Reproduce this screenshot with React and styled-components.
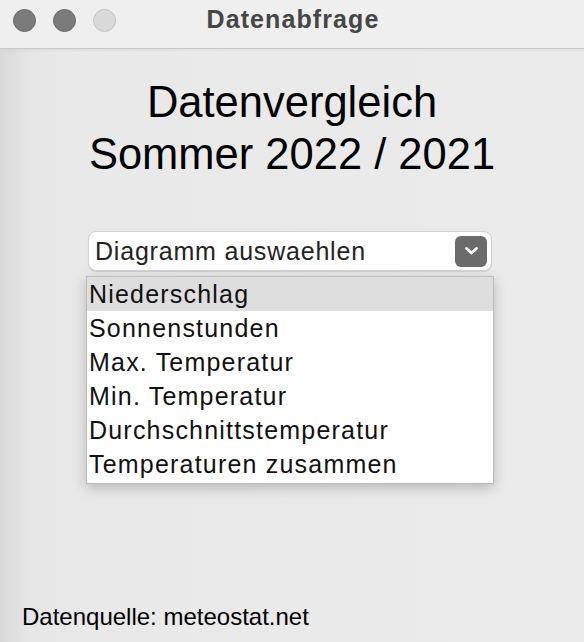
import styled, { createGlobalStyle } from "styled-components";

const GlobalStyle = createGlobalStyle`
  html, body {
    margin: 0;
    padding: 0;
    height: 100%;
  }
  #root {
    height: 100%;
  }
`;

const Window = styled.div`
  width: 584px;
  height: 642px;
  display: flex;
  flex-direction: column;
  background: linear-gradient(to right, #d9d9d9 0px, #e6e6e6 30px, #e9e9e9 80px, #ebebeb 100%);
  font-family: "Liberation Sans", Arial, sans-serif;
  overflow: hidden;
`;

const TitleBar = styled.header`
  height: 48px;
  flex-shrink: 0;
  display: flex;
  align-items: center;
  background: #efefef;
  border-bottom: 1px solid #c9c9c9;
  box-shadow: 0 1px 3px rgba(0, 0, 0, 0.06);
`;

const Lights = styled.div`
  display: flex;
  gap: 17px;
  padding-left: 13px;
  margin-top: -8px;
`;

const Light = styled.span`
  width: 23px;
  height: 23px;
  border-radius: 50%;
  box-sizing: border-box;
  background: ${(p) => (p.$off ? "#dadada" : "#7b7b7b")};
  border: 1px solid ${(p) => (p.$off ? "#c2c2c2" : "#6a6a6a")};
`;

const WindowTitle = styled.h1`
  flex: 1;
  margin: -10px 0 0 -114px;
  text-align: center;
  font-size: 25px;
  font-weight: bold;
  letter-spacing: 1.1px;
  color: #464646;
`;

const Content = styled.main`
  flex: 1;
  display: flex;
  flex-direction: column;
  align-items: center;
`;

const Heading = styled.h2`
  margin: 27px 0 0 0;
  font-size: 43.5px;
  line-height: 52px;
  font-weight: normal;
  text-align: center;
  color: #000;
`;

const SelectWrap = styled.div`
  position: relative;
  align-self: flex-start;
  margin: 51px 0 0 88px;
  width: 404px;
`;

const SelectBox = styled.div`
  height: 40px;
  box-sizing: border-box;
  display: flex;
  align-items: center;
  justify-content: space-between;
  padding: 0 4px 0 6px;
  background: #fff;
  border: 1px solid #d3d3d3;
  border-radius: 8px;
  box-shadow: 0 1px 1px rgba(0, 0, 0, 0.12);
  font-size: 25px;
  letter-spacing: 0.8px;
  color: #232323;
`;

const Chevron = styled.span`
  width: 32px;
  height: 31px;
  border-radius: 6px;
  background: #6b6b6b;
  display: flex;
  align-items: center;
  justify-content: center;
`;

// ! popup list lies over the page below the select
const Menu = styled.ul`
  position: absolute;
  top: 45px;
  left: -2px;
  width: 408px;
  box-sizing: border-box;
  margin: 0;
  padding: 0 0 2px 0;
  list-style: none;
  background: #fff;
  border: 1px solid #bdbdbd;
  box-shadow: 0 4px 12px rgba(0, 0, 0, 0.22);
`;

const MenuItem = styled.li`
  height: 34px;
  display: flex;
  align-items: center;
  padding-left: 2px;
  font-size: 25px;
  letter-spacing: 1.2px;
  color: #111;
  background: ${(p) => (p.$active ? "#dedede" : "transparent")};
`;

const Footer = styled.footer`
  padding: 0 0 11px 22px;
  font-size: 24px;
  line-height: 28px;
  color: #000;
`;

const options = [
  "Niederschlag",
  "Sonnenstunden",
  "Max. Temperatur",
  "Min. Temperatur",
  "Durchschnittstemperatur",
  "Temperaturen zusammen",
];

export default function App() {
  return (
    <>
      <GlobalStyle />
      <Window>
        <TitleBar>
          <Lights>
            <Light />
            <Light />
            <Light $off />
          </Lights>
          <WindowTitle>Datenabfrage</WindowTitle>
        </TitleBar>
        <Content>
          <Heading>
            Datenvergleich
            <br />
            Sommer 2022 / 2021
          </Heading>
          <SelectWrap>
            <SelectBox>
              Diagramm auswaehlen
              <Chevron>
                <svg width="15" height="10" viewBox="0 0 15 10">
                  <path d="M2.5 2.5 L7.5 7 L12.5 2.5" fill="none" stroke="#fff" strokeWidth="2.8" strokeLinecap="round" strokeLinejoin="round" />
                </svg>
              </Chevron>
            </SelectBox>
            <Menu>
              {options.map((o, i) => (
                <MenuItem key={o} $active={i === 0}>
                  {o}
                </MenuItem>
              ))}
            </Menu>
          </SelectWrap>
        </Content>
        <Footer>Datenquelle: meteostat.net</Footer>
      </Window>
    </>
  );
}
